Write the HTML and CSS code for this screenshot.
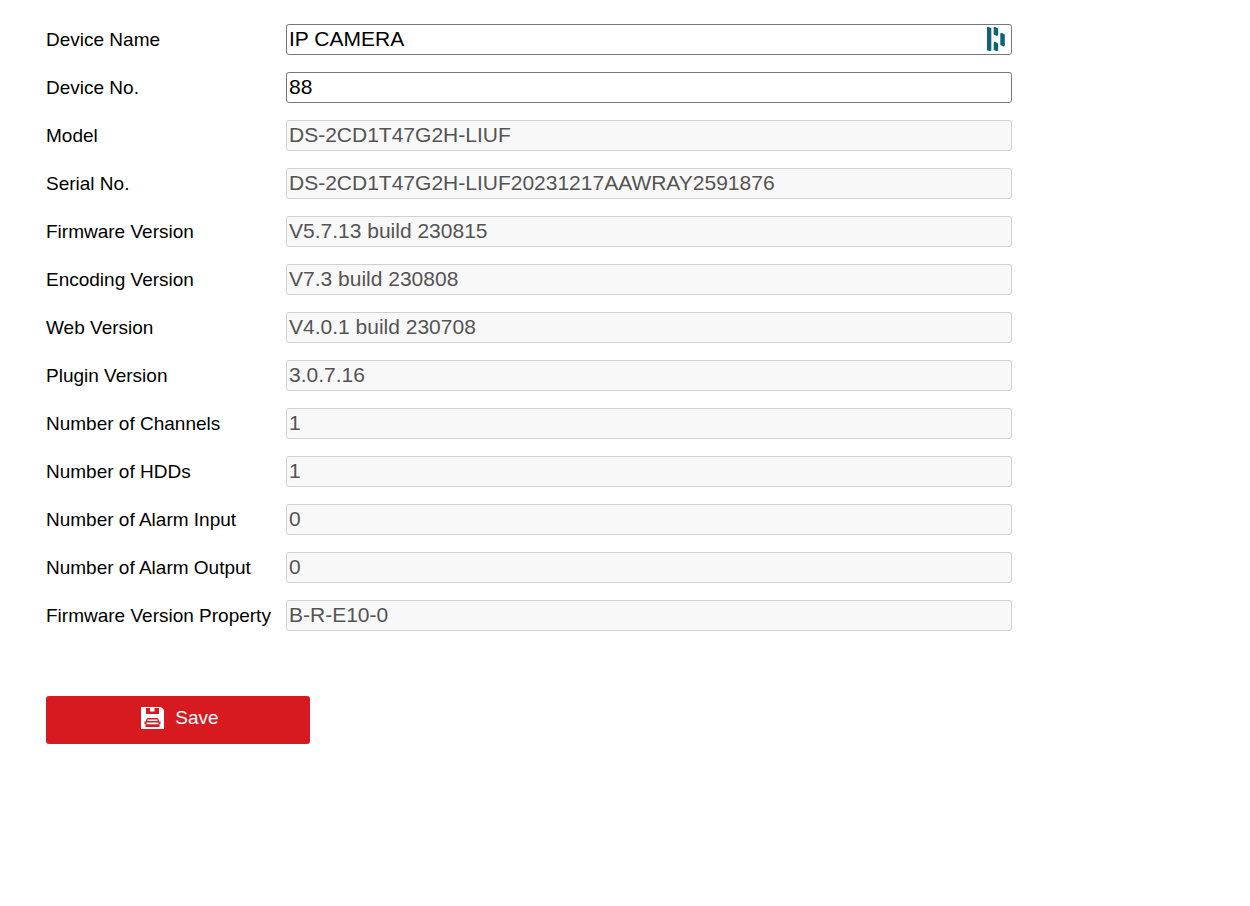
FILE: index.html
```html
<!DOCTYPE html>
<html lang="en">
<head>
  <meta charset="UTF-8">
  <meta name="viewport" content="width=device-width, initial-scale=1.0">
  <title>Basic Information</title>
  <link rel="stylesheet" href="styles.css">
</head>
<body>

<form class="device-form">
  <div class="form-row">
    <label for="deviceName">Device Name</label>
    <div class="field">
      <input type="text" id="deviceName" value="IP CAMERA">
      <!-- Password manager badge -->
      <svg class="field-icon" viewBox="0 0 18 26" aria-hidden="true">
        <path d="M0 1.2 1 0.7 4.3 2V24.2L3 25.2 0 24.2Z"/>
        <path d="M6.7 1.2 7.8 0.7 11.2 2.4V9L10 10 6.7 8.5Z"/>
        <path d="M6.7 16.6 7.8 15.6 11.2 17.4V24.2L10 25.2 6.7 24Z"/>
        <path d="M13.3 7.6 14.4 6.8 17.8 8.6V19.6L16.6 20.6 13.3 19Z"/>
      </svg>
    </div>
  </div>
  <div class="form-row">
    <label for="deviceNo">Device No.</label>
    <div class="field"><input type="text" id="deviceNo" value="88"></div>
  </div>

  <!-- Read-only device info -->
  <div class="form-row">
    <label for="model">Model</label>
    <div class="field"><input type="text" id="model" value="DS-2CD1T47G2H-LIUF" disabled></div>
  </div>
  <div class="form-row">
    <label for="serialNo">Serial No.</label>
    <div class="field"><input type="text" id="serialNo" value="DS-2CD1T47G2H-LIUF20231217AAWRAY2591876" disabled></div>
  </div>
  <div class="form-row">
    <label for="firmwareVersion">Firmware Version</label>
    <div class="field"><input type="text" id="firmwareVersion" value="V5.7.13 build 230815" disabled></div>
  </div>
  <div class="form-row">
    <label for="encodingVersion">Encoding Version</label>
    <div class="field"><input type="text" id="encodingVersion" value="V7.3 build 230808" disabled></div>
  </div>
  <div class="form-row">
    <label for="webVersion">Web Version</label>
    <div class="field"><input type="text" id="webVersion" value="V4.0.1 build 230708" disabled></div>
  </div>
  <div class="form-row">
    <label for="pluginVersion">Plugin Version</label>
    <div class="field"><input type="text" id="pluginVersion" value="3.0.7.16" disabled></div>
  </div>
  <div class="form-row">
    <label for="channels">Number of Channels</label>
    <div class="field"><input type="text" id="channels" value="1" disabled></div>
  </div>
  <div class="form-row">
    <label for="hdds">Number of HDDs</label>
    <div class="field"><input type="text" id="hdds" value="1" disabled></div>
  </div>
  <div class="form-row">
    <label for="alarmInput">Number of Alarm Input</label>
    <div class="field"><input type="text" id="alarmInput" value="0" disabled></div>
  </div>
  <div class="form-row">
    <label for="alarmOutput">Number of Alarm Output</label>
    <div class="field"><input type="text" id="alarmOutput" value="0" disabled></div>
  </div>
  <div class="form-row">
    <label for="firmwareProperty">Firmware Version Property</label>
    <div class="field"><input type="text" id="firmwareProperty" value="B-R-E10-0" disabled></div>
  </div>

  <button type="button" class="save-button">
    <svg class="save-icon" viewBox="0 0 23 22" aria-hidden="true">
      <path fill="#fff" d="M0 0H20L23 3V22H0Z"/>
      <path fill="#d71920" d="M5 1H9V4.5H13.5V1H18V7H5Z"/>
      <path fill="#d71920" d="M6.5 11H16.5L18 13V14.5H19.5V17H18.5V20H4.5V17H3.5V14.5H5V13Z"/>
      <path fill="#fff" d="M6.5 12.6H16.5V14H6.5ZM5.5 15.6H17.5V17.2H5.5Z"/>
    </svg>
    Save
  </button>
</form>

</body>
</html>
```
FILE: styles.css
```css
body {
  margin: 0;
  background: #fff;
  color: #000;
  font-family: "Liberation Sans", Arial, sans-serif;
  font-size: 19px;
}
.device-form {
  max-width: 966px;
  padding: 24px 46px;
}
.form-row {
  display: flex;
  align-items: center;
  margin-bottom: 17px;
}
.form-row label {
  flex: 0 0 240px;
  white-space: nowrap;
}
.field {
  position: relative;
  flex: 1;
  min-width: 0;
}
.field input {
  display: block;
  box-sizing: border-box;
  width: 100%;
  height: 31px;
  padding: 0 2px 2px;
  border: 1px solid #767676;
  border-radius: 3px;
  background: #fff;
  color: #000;
  font-family: inherit;
  font-size: 21px;
}
.field input:disabled {
  border-color: #d0d0d0;
  background: #f8f8f8;
  color: #545454;
}
.field-icon {
  position: absolute;
  top: 2px;
  right: 7px;
  width: 18px;
  height: 26px;
  fill: #0e6477;
}
.save-button {
  display: flex;
  align-items: center;
  justify-content: center;
  gap: 11px;
  width: 264px;
  height: 48px;
  margin-top: 65px;
  padding: 0 0 4px 4px;
  border: none;
  border-radius: 3px;
  background: #d71920;
  color: #fff;
  font-family: inherit;
  font-size: 19px;
  cursor: pointer;
}
.save-icon {
  width: 23px;
  height: 22px;
}
```
